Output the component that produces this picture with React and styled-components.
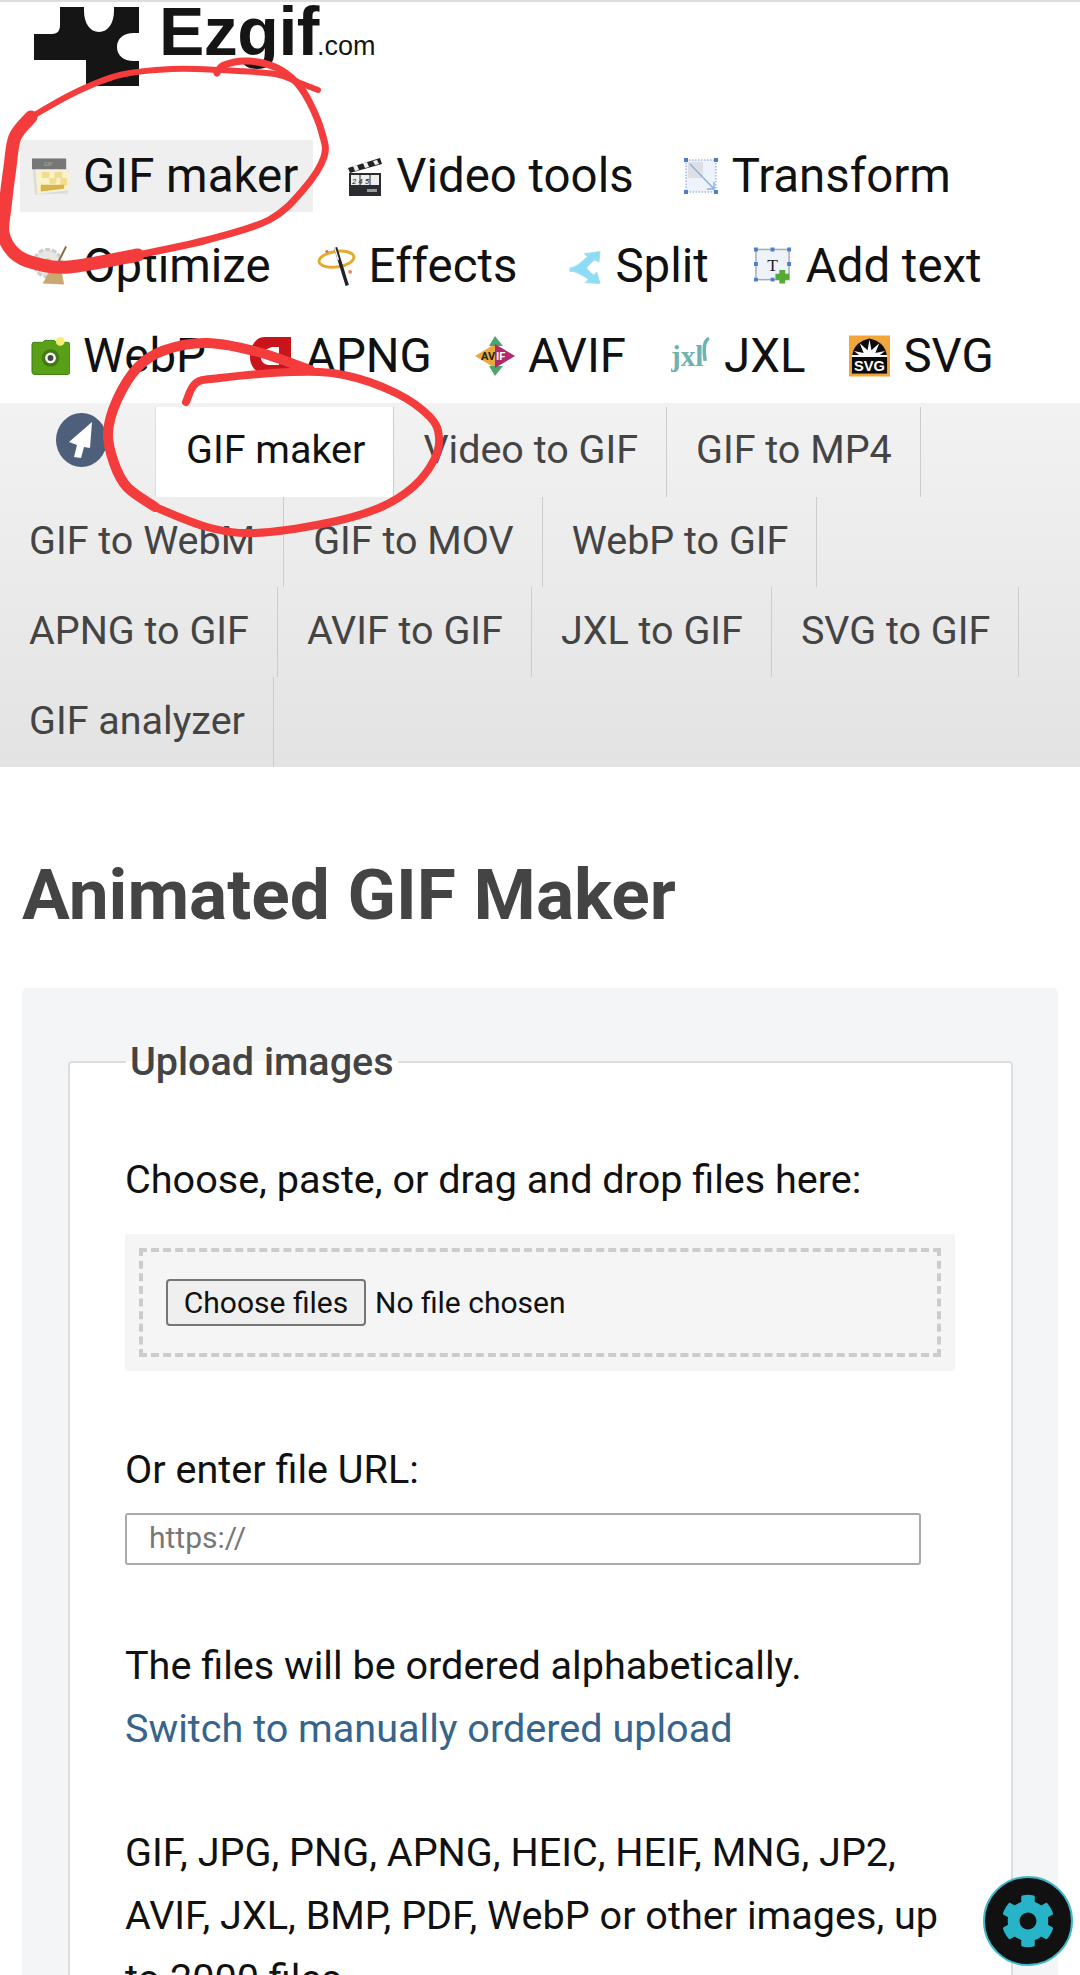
import React from 'react';
import styled, { createGlobalStyle } from 'styled-components';
import { FaCog } from 'react-icons/fa';

const GlobalStyle = createGlobalStyle`
  html, body {
    margin: 0;
    padding: 0;
    background: #fff;
  }
  body {
    font-family: Roboto, "Liberation Sans", sans-serif;
    color: #111;
  }
`;

const Page = styled.div`
  position: relative;
  width: 1080px;
  height: 1975px;
  overflow: hidden;
  background: #fff;
  border-top: 2px solid #ddd;
  box-sizing: border-box;
`;

const Header = styled.header`
  display: flex;
  align-items: flex-start;
  height: 129px;
  padding: 5px 0 0 34px;
  box-sizing: border-box;
`;

const LogoWord = styled.a`
  display: flex;
  align-items: baseline;
  margin: -6px 0 0 20px;
  font-family: "Liberation Sans", Arial, sans-serif;
  color: #151515;
  line-height: 60px;
`;

const LogoName = styled.span`
  font-size: 68px;
  font-weight: 700;
  letter-spacing: -0.5px;
`;

const LogoTld = styled.span`
  font-size: 27px;
  margin-left: -2px;
`;

const Nav = styled.nav`
  padding-left: 20px;
  margin-bottom: 2px;
`;

const NavRow = styled.div`
  display: flex;
  align-items: center;
  height: 90px;
`;

const NavItem = styled.a`
  display: flex;
  align-items: center;
  height: 72px;
  margin-left: ${(p) => p.$lead || 0}px;
  padding: 0 15px 0 11px;
  font-size: 47.4px;
  color: #111;
  white-space: nowrap;
  border-radius: 2px;
  background: ${(p) => (p.$active ? '#efefef' : 'transparent')};
`;

const NavIcon = styled.span`
  display: flex;
  flex: none;
  width: ${(p) => p.$width}px;
  height: 42px;
  margin-right: 13px;
`;

const SubNav = styled.div`
  background: linear-gradient(#f2f2f2, #e3e3e3);
  height: 364px;
`;

const SubRow = styled.div`
  display: flex;
  height: ${(p) => (p.$first ? 94 : 90)}px;
  align-items: flex-end;
`;

const SubLead = styled.div`
  display: flex;
  align-self: flex-start;
  width: 155px;
  padding: 10px 0 0 56px;
  box-sizing: border-box;
`;

const SubTab = styled.a`
  display: flex;
  align-items: center;
  height: 90px;
  box-sizing: border-box;
  padding: 0 28px ${(p) => (p.$raised ? 6 : 3)}px ${(p) => (p.$active ? 30 : 29)}px;
  font-size: 39.5px;
  color: ${(p) => (p.$active ? '#111' : '#444')};
  background: ${(p) => (p.$active ? '#fff' : 'transparent')};
  border-right: 1.5px solid #ccc;
  border-left: ${(p) => (p.$active ? '1.5px solid #ddd' : '0')};
  white-space: nowrap;
`;

const Main = styled.main`
  padding: 0 22px;
`;

const Title = styled.h1`
  margin: 0;
  height: 221px;
  padding-top: 88px;
  box-sizing: border-box;
  font-size: 71.2px;
  line-height: 80px;
  font-weight: 700;
  color: #444;
`;

const Panel = styled.section`
  background: #f4f5f7;
  border-radius: 5px;
  padding: 51px 45px 40px 46px;
`;

const Fieldset = styled.fieldset`
  margin: 0;
  padding: 63px 55px 0 55px;
  background: #fff;
  border: 2px solid #ddd;
  border-radius: 4px;
  min-width: 0;
`;

const Legend = styled.legend`
  margin-left: 1px;
  padding: 0 4px;
  font-size: 39.5px;
  line-height: 46px;
  font-weight: 500;
  color: #444;
`;

const Label = styled.p`
  margin: 0;
  font-size: 39.6px;
  line-height: 63px;
  color: #111;
`;

const DropZone = styled.div`
  margin-top: 23px;
  padding: 14px;
  width: 830px;
  height: 137px;
  box-sizing: border-box;
  background: #f5f5f5;
`;

const DropInner = styled.div`
  display: flex;
  align-items: center;
  height: 100%;
  padding-left: 23px;
  box-sizing: border-box;
  border: 4px dashed #ccc;
  font-size: 30px;
`;

const ChooseButton = styled.button`
  height: 47px;
  width: 200px;
  padding: 0;
  margin-right: 9px;
  font: inherit;
  color: #111;
  background: #efefef;
  border: 2px solid #767676;
  border-radius: 4px;
`;

const UrlBlock = styled.div`
  margin-top: 67px;
`;

const UrlInput = styled.input`
  display: block;
  width: 796px;
  height: 52px;
  margin-top: 12px;
  padding: 0 22px 4px;
  box-sizing: border-box;
  font-family: inherit;
  font-size: 30px;
  background: #fff;
  border: 2px solid #aaa;
  border-radius: 3px;
  &::placeholder {
    color: #777;
  }
`;

const OrderNote = styled(Label)`
  margin-top: 69px;
`;

const Link = styled.a`
  display: block;
  color: #36648b;
`;

const Formats = styled(Label)`
  margin-top: 61px;
  width: 830px;
`;

const FloatButton = styled.button`
  position: absolute;
  left: 983px;
  top: 1874px;
  display: flex;
  align-items: center;
  justify-content: center;
  width: 90px;
  height: 90px;
  padding: 0;
  color: #27b4c8;
  background: #111;
  border: 2px solid #3fb8c8;
  border-radius: 50%;
  box-sizing: border-box;
`;

const Scribble = styled.svg`
  position: absolute;
  left: 0;
  top: -2px;
  width: 1080px;
  height: 600px;
  pointer-events: none;
`;

// smooth line through hand-read points of the marker strokes
const smooth = (pts) => {
  let d = `M${pts[0][0]} ${pts[0][1]}`;
  for (let i = 0; i < pts.length - 1; i++) {
    const p0 = pts[i - 1] || pts[i];
    const p1 = pts[i];
    const p2 = pts[i + 1];
    const p3 = pts[i + 2] || p2;
    const c1x = p1[0] + (p2[0] - p0[0]) / 6;
    const c1y = p1[1] + (p2[1] - p0[1]) / 6;
    const c2x = p2[0] - (p3[0] - p1[0]) / 6;
    const c2y = p2[1] - (p3[1] - p1[1]) / 6;
    d += ` C${c1x} ${c1y} ${c2x} ${c2y} ${p2[0]} ${p2[1]}`;
  }
  return d;
};

const strokes = [
  { width: 6, pts: [[318, 90], [300, 83], [275, 74], [220, 70], [172, 69], [120, 75], [76, 92], [31, 117]] },
  { width: 13, pts: [[31, 117], [15, 137], [10, 167], [5, 207], [3, 233], [14, 253], [34, 263], [69, 267], [138, 255]] },
  { width: 7, pts: [[138, 255], [207, 240], [269, 220], [303, 190], [324, 157], [322, 133], [310, 103], [296, 82], [275, 67], [248, 61], [224, 65], [217, 73]] },
  { width: 8, pts: [[186, 402], [196, 383], [220, 378], [293, 372], [344, 375], [396, 393], [430, 417], [439, 437], [434, 460], [413, 487], [379, 508], [327, 523], [255, 533], [207, 527], [155, 507]] },
  { width: 10, pts: [[155, 507], [127, 487], [114, 463], [108, 433], [117, 400], [138, 367], [165, 350], [207, 343], [258, 352], [310, 370]] },
];

const PuzzleLogo = () => (
  <svg width="105" height="79" viewBox="0 0 105 79">
    <path
      fill="#151515"
      d="M26 0 H50 V4 C50 16 56 25 65 25 C74 25 80 16 80 4 V0 H105 V26 H100 C89 26 83 32 83 40 C83 48 89 54 100 54 H105 V79 H52 V53 H0 V27 H18 C24 27 26 23 26 18 Z"
    />
  </svg>
);

const GifIcon = () => (
  <svg viewBox="0 0 40 40">
    <path fill="#dcdcd8" d="M1 2 H36 L38 38 L4 39 Z" />
    <path fill="#777" d="M1 2 H36 V13 H1 Z" />
    <text x="13" y="10" fontSize="6" fill="#aaa" fontFamily="Roboto, sans-serif">GIF</text>
    <path fill="#fbf3c8" stroke="#eee" strokeWidth="1" d="M5 14 H39 V34 L7 38 Z" />
    <path fill="#f1dc90" d="M11 16 H19 V22 H11 Z M24 16 H32 V22 H24 Z M19 22 H26 V28 H19 Z M30 22 H37 V30 H30 Z" />
    <path fill="#d9b24a" d="M10 29 H34 V33 L10 36 Z" />
  </svg>
);

const ClapperIcon = () => (
  <svg viewBox="0 0 36 42">
    <path fill="#222" d="M1 13 L33 3 L35 9 L3 18 Z" />
    <path fill="#eee" d="M6 11 L10 10 L12 15 L8 16 Z M16 8 L20 7 L22 12 L18 13 Z M26 6 L30 5 L32 9 L28 10 Z" />
    <rect x="2" y="18" width="32" height="23" fill="#2b2b30" />
    <path fill="#eee" d="M4 20 H32 V30 H4 Z" />
    <path stroke="#2b2b30" strokeWidth="1" d="M13 20 V30 M23 20 V30" />
    <text x="5" y="28.5" fontSize="8" fontStyle="italic" fill="#222" fontFamily="Roboto, sans-serif">2 4 5</text>
    <rect x="20" y="34" width="10" height="3" fill="#999" />
  </svg>
);

const TransformIcon = () => (
  <svg viewBox="0 0 36 40">
    <rect x="3" y="4" width="30" height="32" fill="#eef2fb" stroke="#7d9bd4" strokeWidth="1" strokeDasharray="1.5 1.5" />
    <path fill="#dedfe3" d="M5 6 H20 V22 H5 Z" />
    <path stroke="#8fb0e2" strokeWidth="1.5" fill="none" d="M7 8 L31 33 M31 26 V33 H24" />
    <path fill="#4d7fcb" d="M1 2 H5 V6 H1 Z M31 2 H35 V6 H31 Z M1 34 H5 V38 H1 Z M31 34 H35 V38 H31 Z" />
  </svg>
);

const OptimizeIcon = () => (
  <svg viewBox="0 0 40 40">
    <circle cx="17" cy="17" r="14" fill="#e6e6e6" stroke="#ccc" strokeDasharray="5 2" strokeWidth="3" />
    <circle cx="17" cy="17" r="5" fill="#bcd58a" />
    <path stroke="#8a6b3c" strokeWidth="2" d="M36 0 L25 22" />
    <path fill="#c9a873" d="M22 19 L31 24 L34 39 L12 38 Z" />
  </svg>
);

const WandIcon = () => (
  <svg viewBox="0 0 40 40">
    <ellipse cx="20" cy="13" rx="18" ry="8" fill="none" stroke="#e5a92f" strokeWidth="3" transform="rotate(-8 20 13)" />
    <path stroke="#222" strokeWidth="3.5" d="M19 1 L31 40" />
    <path stroke="#eee" strokeWidth="1.5" d="M18 1 L22 14" />
    <circle cx="10" cy="5" r="1.5" fill="#e46b3a" />
    <circle cx="34" cy="26" r="2" fill="#e88a4a" />
  </svg>
);

const SplitIcon = () => (
  <svg viewBox="0 0 32 36">
    <path
      fill="#8ddcf5"
      stroke="#a6dcee"
      d="M1 20 C9 19 13 13 18 9 L15 6 L30 4 L29 14 L25 12 C21 15 18 18 17 20 C19 23 21 25 24 27 L27 24 L30 35 L16 34 L19 31 C14 28 9 23 1 23 Z"
    />
  </svg>
);

const AddTextIcon = () => (
  <svg viewBox="0 0 40 40">
    <rect x="2" y="3" width="34" height="31" fill="#eef3fb" stroke="#a9a9b0" strokeWidth="1.5" />
    <path fill="#4d7fcb" d="M0 1 H4 V5 H0 Z M17 1 H21 V5 H17 Z M34 1 H38 V5 H34 Z M0 16 H4 V20 H0 Z M34 16 H38 V20 H34 Z M0 32 H4 V36 H0 Z M17 32 H21 V36 H17 Z" />
    <text x="19" y="25" fontSize="18" textAnchor="middle" fill="#222" fontFamily="Liberation Serif, serif">T</text>
    <path fill="#55a935" d="M26 24 H32 V38 H26 Z M22 28 H36 V34 H22 Z" />
  </svg>
);

const WebpIcon = () => (
  <svg viewBox="0 0 40 40">
    <path fill="#5aa016" stroke="#3f7f10" d="M2 6 H12 L14 4 H24 L26 6 H38 C39 6 40 7 40 8 V36 C40 38 39 39 37 39 H4 C2 39 1 38 1 36 V8 Z" />
    <circle cx="20" cy="22" r="9" fill="#3f7c14" />
    <circle cx="20" cy="22" r="5.5" fill="#fff" />
    <circle cx="20" cy="22" r="3" fill="#444" />
    <circle cx="30" cy="5" r="4.5" fill="#f3ee76" />
  </svg>
);

const ApngIcon = () => (
  <svg viewBox="0 0 42 42">
    <path
      fill="#c8141a"
      fillRule="evenodd"
      d="M14 2 H41 V39 H16 C6 39 0 31 0 22 C0 11 6 2 14 2 Z M17 14 C12 16 11 20 11 23 C11 27 15 30 19 30 H29 V12 H22 Z"
    />
  </svg>
);

const AvifIcon = () => (
  <svg viewBox="0 0 40 40">
    <path fill="#e9a93c" d="M0 20 L20 8 V32 Z" />
    <path fill="#4fa56b" d="M20 0 L28 10 H14 Z M20 40 L28 30 H14 Z" />
    <path fill="#b02a6d" d="M20 8 L40 20 L20 32 Z" />
    <text x="6" y="24" fontSize="11" fontWeight="700" fill="#222" fontFamily="Roboto, sans-serif">AV</text>
    <text x="21" y="24" fontSize="11" fontWeight="700" fill="#fff" fontFamily="Roboto, sans-serif">IF</text>
  </svg>
);

const JxlIcon = () => (
  <svg viewBox="0 0 41 42">
    <text x="0" y="31" fontSize="30" fontWeight="700" fill="#6fb3b0" fontFamily="Liberation Serif, serif">
      jxl
    </text>
    <path fill="none" stroke="#6fb3b0" strokeWidth="3.5" d="M39 3 C34 5 33 12 35 26" />
  </svg>
);

const SvgIcon = () => (
  <svg viewBox="0 0 42 42">
    <rect width="42" height="42" fill="#f2a53a" />
    <rect x="3" y="22" width="36" height="17" fill="#0c0c0c" />
    <path fill="#0c0c0c" d="M3 22 C4 10 12 5 21 3 C30 5 38 10 39 22 Z" />
    <path fill="#fff" d="M21 4 L23 15 L31 8 L27 18 L37 16 L29 22 H13 L5 16 L15 18 L11 8 L19 15 Z" />
    <rect x="3" y="20" width="36" height="2" fill="#fff" />
    <text x="21" y="36" fontSize="15" fontWeight="700" textAnchor="middle" fill="#fff" fontFamily="Liberation Sans, sans-serif">SVG</text>
  </svg>
);

const ArrowBadge = () => (
  <svg width="51" height="54" viewBox="0 0 51 54">
    <ellipse cx="25.5" cy="27" rx="25.5" ry="27" fill="#4d5f7a" />
    <path fill="#fff" d="M36 9 L13 29 L21 32 L18 44 L25 45 L28 34 L34 35 Z" />
  </svg>
);

const mainNav = [
  [
    { label: 'GIF maker', icon: GifIcon, width: 39, active: true },
    { label: 'Video tools', icon: ClapperIcon, width: 36, lead: 23 },
    { label: 'Transform', icon: TransformIcon, width: 36, lead: 23 },
  ],
  [
    { label: 'Optimize', icon: OptimizeIcon, width: 39 },
    { label: 'Effects', icon: WandIcon, width: 39, lead: 20 },
    { label: 'Split', icon: SplitIcon, width: 33, lead: 26 },
    { label: 'Add text', icon: AddTextIcon, width: 39, lead: 19 },
  ],
  [
    { label: 'WebP', icon: WebpIcon, width: 39 },
    { label: 'APNG', icon: ApngIcon, width: 42, lead: 18 },
    { label: 'AVIF', icon: AvifIcon, width: 40, lead: 17 },
    { label: 'JXL', icon: JxlIcon, width: 40, lead: 19 },
    { label: 'SVG', icon: SvgIcon, width: 41, lead: 18 },
  ],
];

const subNav = [
  ['GIF to WebM', 'GIF to MOV', 'WebP to GIF'],
  ['APNG to GIF', 'AVIF to GIF', 'JXL to GIF', 'SVG to GIF'],
  ['GIF analyzer'],
];

const App = () => (
  <Page>
    <GlobalStyle />
    <Header>
      <PuzzleLogo />
      <LogoWord>
        <LogoName>Ezgif</LogoName>
        <LogoTld>.com</LogoTld>
      </LogoWord>
    </Header>

    <Nav>
      {mainNav.map((row, i) => (
        <NavRow key={i}>
          {row.map(({ label, icon: Icon, width, lead, active }) => (
            <NavItem key={label} $lead={lead} $active={active}>
              <NavIcon $width={width}>
                <Icon />
              </NavIcon>
              {label}
            </NavItem>
          ))}
        </NavRow>
      ))}
    </Nav>

    <SubNav>
      <SubRow $first>
        <SubLead>
          <ArrowBadge />
        </SubLead>
        <SubTab $active $raised>GIF maker</SubTab>
        <SubTab $raised>Video to GIF</SubTab>
        <SubTab $raised>GIF to MP4</SubTab>
      </SubRow>
      {subNav.map((row, i) => (
        <SubRow key={i}>
          {row.map((label) => (
            <SubTab key={label}>{label}</SubTab>
          ))}
        </SubRow>
      ))}
    </SubNav>

    <Main>
      <Title>Animated GIF Maker</Title>
      <Panel>
        <Fieldset>
          <Legend>Upload images</Legend>
          <Label>Choose, paste, or drag and drop files here:</Label>
          <DropZone>
            <DropInner>
              <ChooseButton>Choose files</ChooseButton>
              No file chosen
            </DropInner>
          </DropZone>
          <UrlBlock>
            <Label>Or enter file URL:</Label>
            <UrlInput placeholder="https://" />
          </UrlBlock>
          <OrderNote>
            The files will be ordered alphabetically.
            <Link>Switch to manually ordered upload</Link>
          </OrderNote>
          <Formats>
            GIF, JPG, PNG, APNG, HEIC, HEIF, MNG, JP2, AVIF, JXL, BMP, PDF, WebP or other images, up to 2000 files.
          </Formats>
        </Fieldset>
      </Panel>
    </Main>

    <FloatButton>
      <FaCog size={54} />
    </FloatButton>

    <Scribble viewBox="0 0 1080 600" fill="none" stroke="#f53c3c" strokeLinecap="round" strokeLinejoin="round">
      {strokes.map(({ width, pts }, i) => (
        <path key={i} strokeWidth={width} d={smooth(pts)} />
      ))}
    </Scribble>
  </Page>
);

export default App;
